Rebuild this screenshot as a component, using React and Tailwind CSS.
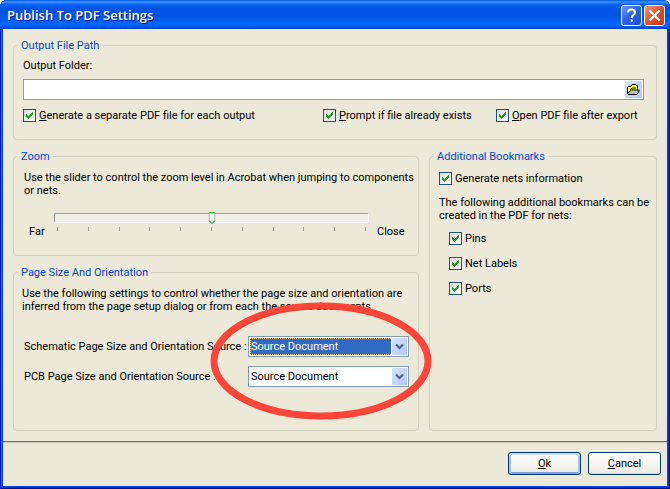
import { useState } from "react";

function Check({ children, checked = true }) {
  return (
    <label className="flex h-[15px] items-center gap-[3px] whitespace-nowrap">
      <span className="grid size-[13px] shrink-0">
        <input
          type="checkbox"
          defaultChecked={checked}
          className="peer col-start-1 row-start-1 size-[13px] appearance-none border border-[#1c5180] bg-linear-to-br from-[#dcdcd7] to-white"
        />
        <svg
          viewBox="0 0 13 13"
          shapeRendering="crispEdges"
          className="pointer-events-none col-start-1 row-start-1 size-[13px] opacity-0 peer-checked:opacity-100"
        >
          <path
            fill="#21a121"
            d="M3 5h1v3h-1zM4 6h1v3h-1zM5 7h1v3h-1zM6 6h1v3h-1zM7 5h1v3h-1zM8 4h1v3h-1zM9 3h1v3h-1z"
          />
        </svg>
      </span>
      <span>{children}</span>
    </label>
  );
}

function Group({ title, className, children }) {
  return (
    <fieldset className="min-w-0 rounded-[4px] border border-[#d0d0bf]">
      <legend className="ml-1 px-[3px] leading-[15px] text-[#0046d5]">{title}</legend>
      <div className={className}>{children}</div>
    </fieldset>
  );
}

function SourceSelect({ id, active }) {
  return (
    <div className="relative border border-[#7f9db9] bg-white p-px">
      <select
        id={id}
        className={
          active
            ? "block h-[17px] w-full appearance-none bg-[#316ac5] px-px text-white outline-1 -outline-offset-1 outline-dotted outline-[#ffd8a0]"
            : "block h-[17px] w-full appearance-none bg-white px-px text-black outline-none"
        }
      >
        <option>Source Document</option>
      </select>
      <span className="pointer-events-none absolute inset-y-px right-px w-4 border-l border-white bg-linear-to-br from-[#d7e2fd] to-[#b2c8f8]">
        <svg viewBox="0 0 15 17" className="h-[17px] w-[15px]">
          <path d="M4 6.500l3.500 3.500l3.500-3.500" fill="none" stroke="#4d6185" strokeWidth="2.200" />
        </svg>
      </span>
    </div>
  );
}

function ZoomSlider() {
  const [value, setValue] = useState(5);
  return (
    <div className="mt-[15px] flex gap-2 pr-4 pl-[5px]">
      <label htmlFor="zoom" className="mt-3 w-[17px] leading-[15px]">
        Far
      </label>
      <div className="relative min-w-0 flex-1">
        <div className="mt-px h-[10px] rounded-[2px] border border-t-[#9d9c99] border-r-white border-b-white border-l-[#9d9c99] bg-[#f0f0e8]" />
        <div className="mt-1 flex justify-between px-[3px]">
          {Array.from({ length: 11 }, (_, i) => (
            <span key={i} className="h-1 w-px bg-[#a3a18f]" />
          ))}
        </div>
        <div className="pointer-events-none absolute inset-x-[3px] top-0 h-3">
          <svg
            viewBox="0 0 7 12"
            className="absolute h-3 w-[7px] -translate-x-1/2"
            style={{ left: `${value * 10}%` }}
          >
            <path d="M.5 1v7.500l3 3l3-3V1z" fill="#f3f3ef" stroke="#8fa3b0" />
            <path d="M1 .500h5" stroke="#21b121" />
            <path d="M.5 8.500l3 3l3-3" fill="none" stroke="#21a121" />
          </svg>
        </div>
        <input
          id="zoom"
          type="range"
          min="0"
          max="10"
          value={value}
          onChange={(e) => setValue(Number(e.target.value))}
          className="absolute inset-x-0 top-0 h-3 w-full opacity-0"
        />
      </div>
      <span className="mt-3 w-[25px] leading-[15px]">Close</span>
    </div>
  );
}

export default function App() {
  return (
    <div className="bg-white font-['Roboto',sans-serif] text-[11px] leading-[13px] text-black">
      <div className="rounded-t-[7px] bg-[#0046e0] px-[3px] pb-[3px] shadow-[inset_1px_0_#0019cf,inset_-1px_-1px_#00138c,inset_-2px_-2px_#0030c8,inset_2px_0_#166aee]">
        <header className="-mx-[3px] flex h-[29px] items-center justify-between rounded-t-[7px] bg-[linear-gradient(180deg,#0058e6_0%,#3f93ff_7%,#0863f0_15%,#0054e3_30%,#0055e5_55%,#0066ff_80%,#0062f5_90%,#003fc4_100%)] pt-[2px] pr-[5px] pl-[7px]">
          <h1 className="font-['Open_Sans',sans-serif] text-[13px] font-semibold text-white [text-shadow:1px_1px_#0a1883]">
            Publish To PDF Settings
          </h1>
          <div className="flex gap-[2px]">
            <button
              aria-label="Help"
              className="size-[21px] rounded-[3px] border border-white bg-linear-to-br from-[#6b97f5] via-[#2c5fe2] to-[#1c4fd0]"
            >
              <svg viewBox="0 0 19 19" className="size-[19px]">
                <path
                  d="M6 6.500c0-2 1.500-3 3.500-3s3.500 1.200 3.500 3c0 2.500-3.300 2.500-3.300 5.500M9.700 13.500v2.200"
                  fill="none"
                  stroke="#fff"
                  strokeWidth="2"
                />
              </svg>
            </button>
            <button
              aria-label="Close"
              className="size-[21px] rounded-[3px] border border-white bg-linear-to-br from-[#f0957c] via-[#e0502c] to-[#c8360c]"
            >
              <svg viewBox="0 0 19 19" className="size-[19px]">
                <path d="M4.500 4.500l10 10M14.500 4.500l-10 10" stroke="#fff" strokeWidth="2.400" />
              </svg>
            </button>
          </div>
        </header>

        <main className="bg-[#ece9d8]">
          <div className="flex flex-col gap-[9px] px-[10px] pt-[9px] pb-[10px]">
            <Group title="Output File Path" className="pt-[5px] pr-3 pb-4 pl-[9px]">
              <label htmlFor="folder" className="block leading-[15px]">
                Output Folder:
              </label>
              <div className="mt-[6px] flex h-[21px] border border-[#7f9db9] bg-white p-px">
                <input id="folder" type="text" className="min-w-0 flex-1 px-1 outline-none" />
                <button
                  aria-label="Browse"
                  className="h-[17px] w-[17px] rounded-[2px] bg-linear-to-br from-[#d7e2fd] to-[#b2c8f8]"
                >
                  <svg viewBox="0 0 17 17" className="size-[17px]">
                    <path
                      d="M2.500 12.500v-6l1-1h2l1.500-2h3.500l1 1h1v4.500"
                      fill="#ffff00"
                      stroke="#000"
                    />
                    <path d="M4 10.500l2-3h6.500v2.500z" fill="#ffff00" />
                    <path d="M5.500 8.500l1.500-1.500h4" fill="none" stroke="#000" />
                    <path d="M2.500 12.500l1 1h8.500l2-3.500v-1h-7.500z" fill="#c4c4bc" stroke="#000" />
                  </svg>
                </button>
              </div>
              <div className="mt-2 grid grid-cols-[300fr_173fr_148fr]">
                <Check>
                  <u>G</u>enerate a separate PDF file for each output
                </Check>
                <Check>
                  <u>P</u>rompt if file already exists
                </Check>
                <Check>
                  <u>O</u>pen PDF file after export
                </Check>
              </div>
            </Group>

            <div className="grid grid-cols-[406fr_228fr] gap-[10px]">
              <div className="flex min-w-0 flex-col gap-[9px]">
                <Group title="Zoom" className="pt-[7px] pb-4 pl-[10px]">
                  <p>
                    Use the slider to control the zoom level in Acrobat when jumping to components
                    or nets.
                  </p>
                  <ZoomSlider />
                </Group>

                <Group title="Page Size And Orientation" className="pt-[7px] pr-[9px] pb-[43px] pl-2">
                  <p>
                    Use the following settings to control whether the page size and orientation are
                    inferred from the page setup dialog or from each the source documents.
                  </p>
                  <div className="mt-[23px] flex justify-between pl-[2px]">
                    <div className="flex flex-col gap-[9px] leading-[21px] whitespace-nowrap">
                      <label htmlFor="sch">Schematic Page Size and Orientation Source :</label>
                      <label htmlFor="pcb">PCB Page Size and Orientation Source :</label>
                    </div>
                    <div className="relative flex w-[161px] shrink-0 flex-col gap-[9px]">
                      <SourceSelect id="sch" active />
                      <SourceSelect id="pcb" />
                      <svg
                        viewBox="0 0 222 118"
                        className="pointer-events-none absolute -top-[34px] -left-[38px] h-[118px] w-[222px] max-w-none"
                      >
                        <ellipse
                          cx="111"
                          cy="59"
                          rx="107"
                          ry="55"
                          fill="none"
                          stroke="#ff4538"
                          strokeWidth="7"
                        />
                      </svg>
                    </div>
                  </div>
                </Group>
              </div>

              <Group title="Additional Bookmarks" className="pt-[7px] pl-[9px]">
                <Check>Generate nets information</Check>
                <p className="mt-[10px]">
                  The following additional bookmarks can be created in the PDF for nets:
                </p>
                <div className="mt-[9px] flex flex-col gap-[10px] pl-[10px]">
                  <Check>Pins</Check>
                  <Check>Net Labels</Check>
                  <Check>Ports</Check>
                </div>
              </Group>
            </div>
          </div>

          <footer className="flex justify-end gap-[7px] border-t border-[#716f64] px-[6px] pt-[10px] pb-[11px] shadow-[inset_0_1px_#cfccbc]">
            <button className="h-[23px] w-[73px] rounded-[3px] border border-[#003c74] bg-linear-to-b from-white to-[#ecebe5] shadow-[inset_0_2px_#c6d9f8,inset_2px_0_#a5c0ee,inset_-2px_0_#a5c0ee,inset_0_-2px_#7f9fe0]">
              <u>O</u>k
            </button>
            <button className="h-[23px] w-[73px] rounded-[3px] border border-[#003c74] bg-linear-to-b from-white to-[#ecebe5] shadow-[inset_0_-1px_#d6d0c5]">
              <u>C</u>ancel
            </button>
          </footer>
        </main>
      </div>
    </div>
  );
}
